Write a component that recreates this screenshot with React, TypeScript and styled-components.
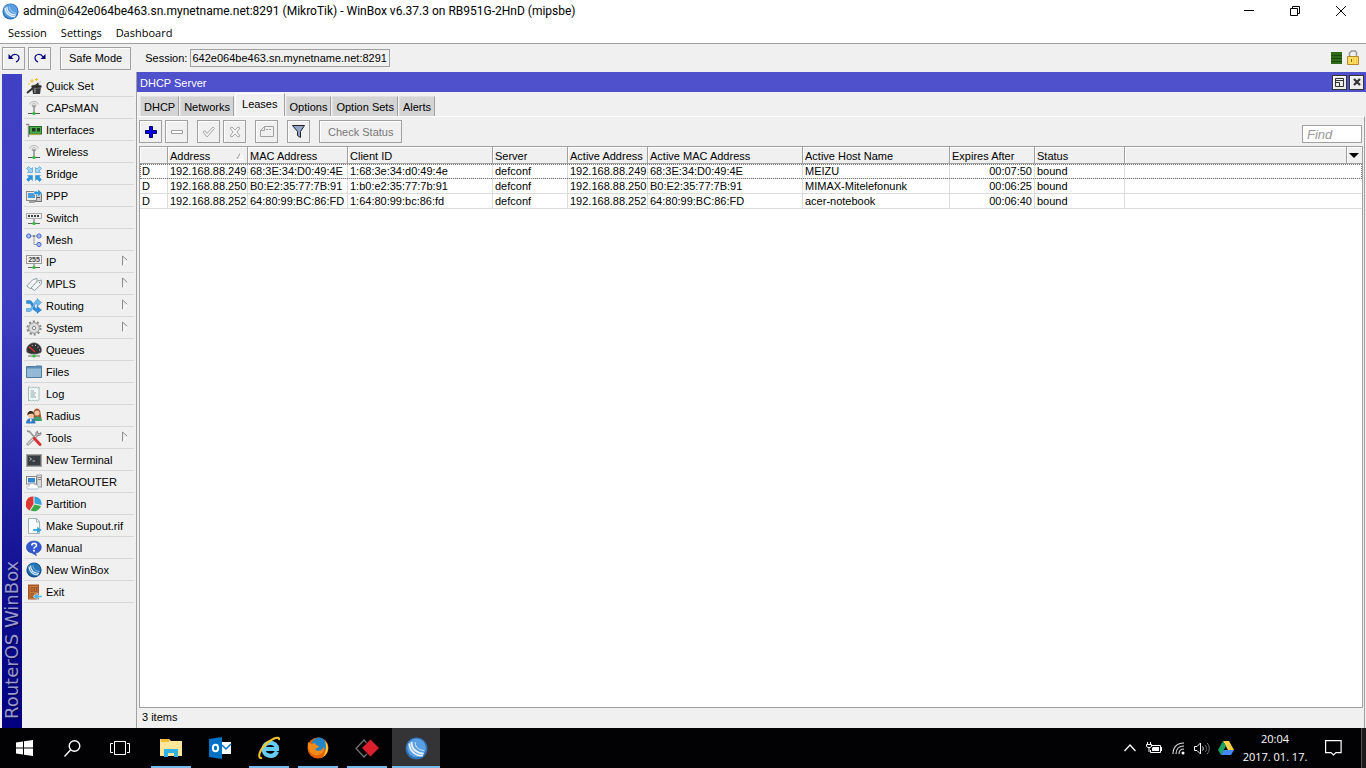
import React from 'react';
import styled, { createGlobalStyle } from 'styled-components';

const ui = '"Liberation Sans", Arial, sans-serif';
const shell = '"Open Sans", "Segoe UI", sans-serif';
const line = '#a0a0a0';

const GlobalStyle = createGlobalStyle`
  *, *::before, *::after { box-sizing: border-box; }
  body { margin: 0; background: #f0f0f0; color: #000; font: 11px/14px ${ui}; }
  button, input { font: inherit; color: inherit; }
  button { border: 0; padding: 0; background: none; }
  svg { display: block; flex: none; }
`;

const Screen = styled.div`
  min-height: 100vh;
  display: flex;
  flex-direction: column;
`;

const TitleBar = styled.header`
  height: 22px;
  display: flex;
  align-items: center;
  background: #fff;
  padding: 0 2px;
  gap: 4px;
`;

const WindowTitle = styled.h1`
  margin: 0;
  flex: 1;
  font: 400 12px/16px Roboto, "Segoe UI", sans-serif;
`;

const WindowButtons = styled.div`
  display: flex;
`;

const WindowButton = styled.button`
  width: 46px;
  height: 22px;
  display: flex;
  align-items: center;
  justify-content: center;
`;

const MenuBar = styled.nav`
  height: 22px;
  display: flex;
  gap: 14px;
  padding: 0 8px;
  background: #fff;
  border-bottom: 1px solid ${line};
`;

const MenuButton = styled.button`
  font: 11px/20px ${shell};
`;

const SessionBar = styled.div`
  height: 28px;
  display: flex;
  align-items: center;
  padding: 0 7px 0 2px;
  gap: 3px;
`;

const ToolButton = styled.button<{ $wide?: boolean; $gap?: boolean; $muted?: boolean }>`
  height: 23px;
  width: ${p => (p.$wide ? 'auto' : '23px')};
  padding: 0 ${p => (p.$wide ? '8px' : '0')};
  margin-left: ${p => (p.$gap ? '6px' : '0')};
  display: flex;
  align-items: center;
  justify-content: center;
  border: 1px solid ${line};
  box-shadow: inset 1px 1px #fff;
  background: #f0f0f0;
  color: ${p => (p.$muted ? '#787878' : '#000')};
`;

const SessionLabel = styled.label`
  margin-left: 11px;
  flex: 1;
  display: flex;
  align-items: center;
`;

const SessionInput = styled.input`
  width: 200px;
  height: 18px;
  padding: 0 1px;
  border: 1px solid ${line};
  background: #f0f0f0;
`;

const Body = styled.div`
  flex: 1;
  display: flex;
`;

const Brand = styled.div`
  width: 20px;
  margin: 0 2px 2px;
  padding-top: 9px;
  background: linear-gradient(#000080 0%, #101090 22%, #3c3cc0 64%, #4040c4 100%);
  color: #9a9ace;
  font: 18px/20px "DejaVu Sans", Verdana, sans-serif;
  text-shadow: -1px 1px 1px #00004c;
  writing-mode: vertical-rl;
  transform: rotate(180deg);
`;

const BrandColumn = styled.div`
  display: flex;
  padding-top: 2px;
  margin-bottom: -2px;
`;

const SideNav = styled.nav`
  width: 112px;
  padding: 3px 2px 0 0;
  display: flex;
  flex-direction: column;
`;

const SideItem = styled.button`
  height: 22px;
  display: flex;
  align-items: center;
  gap: 4px;
  padding: 0 6px 0 2px;
  border-bottom: 1px solid #d8d8d8;
  text-align: left;
`;

const SideText = styled.span`
  flex: 1;
  white-space: nowrap;
`;

const Pane = styled.main`
  flex: 1;
  min-width: 0;
  display: flex;
  flex-direction: column;
  border-left: 1px solid ${line};
`;

const PaneTitle = styled.div`
  height: 20px;
  display: flex;
  align-items: center;
  gap: 2px;
  padding: 0 2px 0 3px;
  background: #4e50cc;
  color: #fff;
`;

const PaneHeading = styled.h2`
  margin: 0;
  padding-top: 2px;
  flex: 1;
  font: 400 11px/14px ${ui};
`;

const PaneButton = styled.button`
  width: 15px;
  height: 15px;
  background: #ececec;
  border: 1px solid #333;
  box-shadow: inset 1px 1px #fff;
  display: flex;
  align-items: center;
  justify-content: center;
`;

const Tabs = styled.div`
  height: 24px;
  display: flex;
  align-items: flex-end;
  padding-left: 3px;
  gap: 1px;
`;

const Tab = styled.button<{ $on?: boolean }>`
  height: ${p => (p.$on ? '23px' : '20px')};
  padding: 0 ${p => (p.$on ? '6px 2px' : '3px 0')};
  background: ${p => (p.$on ? '#f0f0f0' : '#d4d4d4')};
  border: 1px solid ${p => (p.$on ? '#fff' : '#e0e0e0')};
  border-right-color: ${line};
  border-bottom: 0;
`;

const Content = styled.section`
  flex: 1;
  display: flex;
  flex-direction: column;
  margin-right: 1px;
  padding: 0 1px 0 2px;
  border-top: 1px solid #fff;
  border-right: 1px solid ${line};
`;

const ActionBar = styled.div`
  height: 29px;
  display: flex;
  align-items: center;
  gap: 3px;
  padding-right: 1px;
`;

const FindInput = styled.input`
  width: 60px;
  height: 18px;
  margin: 5px 0 0 auto;
  padding: 0 4px;
  border: 1px solid ${line};
  background: #fff;
  font-size: 13px;
  font-style: italic;
  &::placeholder { color: #999; opacity: 1; }
`;

const Grid = styled.div`
  flex: 1;
  background: #fff;
  border: 1px solid ${line};
`;

const Table = styled.table`
  width: 100%;
  table-layout: fixed;
  border-collapse: separate;
  border-spacing: 0;
`;

const Head = styled.th`
  height: 17px;
  padding: 1px 2px 0;
  background: #f0f0f0;
  border-right: 1px solid ${line};
  border-bottom: 1px solid ${line};
  box-shadow: inset 1px 1px #fff;
  font-weight: 400;
  text-align: left;
  white-space: nowrap;
  &:last-child { border-right: 0; }
`;

const HeadInner = styled.span`
  display: flex;
  align-items: center;
  justify-content: space-between;
`;

const Row = styled.tr<{ $focus?: boolean }>`
  outline: ${p => (p.$focus ? '1px dotted #777' : 'none')};
  outline-offset: -1px;
`;

const Cell = styled.td<{ $right?: boolean }>`
  height: 15px;
  padding: 0 2px;
  line-height: 14px;
  border-right: 1px solid #dcdcdc;
  border-bottom: 1px solid #dcdcdc;
  text-align: ${p => (p.$right ? 'right' : 'left')};
  white-space: nowrap;
  &:last-child { border-right: 0; }
`;

const Status = styled.footer`
  height: 20px;
  padding: 2px 3px;
`;

const Taskbar = styled.footer`
  position: relative;
  height: 40px;
  display: flex;
  background: #020204;
  color: #fff;
`;

const TaskGroup = styled.div<{ $apps?: boolean }>`
  display: flex;
  gap: ${p => (p.$apps ? '1px' : '0')};
  margin-left: ${p => (p.$apps ? '3px' : '0')};
`;

const TaskButton = styled.button<{ $state?: 'open' | 'active' }>`
  width: 48px;
  height: 40px;
  display: flex;
  align-items: center;
  justify-content: center;
  background:
    linear-gradient(#76b9ed, #76b9ed) bottom / ${p => (p.$state === 'active' ? '48px' : p.$state ? '40px' : '0')} 2px no-repeat
    ${p => (p.$state === 'active' ? '#343436' : 'transparent')};
`;

const Tray = styled.div`
  margin-left: auto;
  display: flex;
  align-items: center;
`;

const TrayButton = styled.button`
  width: 24px;
  height: 40px;
  display: flex;
  align-items: center;
  justify-content: center;
`;

const Clock = styled.button`
  width: 71px;
  height: 40px;
  padding-left: 3px;
  font: 11px/18px ${shell};
  text-align: center;
`;

const Notices = styled(TrayButton)`
  width: 48px;
  margin-right: 4px;
`;

const DesktopButton = styled.button`
  width: 5px;
  height: 40px;
  border-left: 1px solid #555;
  background: #1c1a1a;
`;

const Svg = ({ s = 16, children }: { s?: number; children: React.ReactNode }) => (
  <svg width={s} height={s} viewBox="0 0 16 16" fill="none" aria-hidden="true">{children}</svg>
);

const Orb = ({ s = 16, dark }: { s?: number; dark?: boolean }) => (
  <Svg s={s}>
    <circle cx="8" cy="8" r="7.6" fill={dark ? '#124f88' : '#2f72b8'} />
    <circle cx="8" cy="7.500" r="6.500" fill={dark ? '#2474b8' : '#5a9fe2'} />
    <path d="M3 4.500c0 5 4 8.500 9.500 8.500M4.500 3.500c0 4.500 3 7.500 8.500 8" stroke="#e8f3fc" strokeWidth="1.200" />
    <path d="M7 3.500c0 3 2 5.500 6.500 6" stroke="#bcdcf6" strokeWidth=".7" />
  </Svg>
);

const antenna = (
  <Svg>
    <path d="M3.500 4.500c1-4 8-4 9 0M5.500 5.500c1-2.500 4-2.500 5 0" stroke="#b0b0b0" />
    <path d="M8 5.500V13M6 6h4" stroke="#777" strokeWidth="1.200" />
    <path d="M2 13.500h12" stroke="#555" />
    <rect x="6.500" y="12" width="3" height="3" rx="1" fill="#2fc23a" />
  </Svg>
);

const bridgeArrow = 'M6.500 1.500v5h-5L3 5 .5 2.500l2-2L5 3z';

const icons: Record<string, React.ReactNode> = {
  'Quick Set': <Svg><path d="M6 9h9l-1 7H7z" fill="#3a3a3a" /><path d="M9 10v5" stroke="#aaa" /><ellipse cx="10.500" cy="8.500" rx="5.300" ry="1.700" fill="#222" stroke="#999" strokeWidth=".6" /><path d="M1 15L13 5" stroke="#333" strokeWidth="2" /><path d="M12.500 5.500L15 3" stroke="#ddd" strokeWidth="2" /><path d="M6 1v4M4 3h4M10.500 0v3M9 1.500h3M2 6h2" stroke="#ecc02c" /></Svg>,
  CAPsMAN: antenna,
  Wireless: antenna,
  Interfaces: <Svg><path d="M0 2.500h2.500V15" stroke="#8f8f8f" strokeWidth="1.500" /><path d="M1.500 3v12" stroke="#ddd" /><rect x="3.500" y="4.500" width="12" height="7.500" fill="#4cab4c" stroke="#23702a" /><path d="M6 6h3.500v3.500H6zM11 6h3v3.500h-3z" fill="#1e3a22" /><path d="M5 12.500h9" stroke="#c9a92c" strokeWidth="1.500" strokeDasharray="1 1" /></Svg>,
  Bridge: <Svg><g stroke="#2f86c4" strokeWidth=".5"><path d={bridgeArrow} fill="#9bd4f4" /><path d={bridgeArrow} transform="matrix(-1 0 0 1 16 0)" fill="#9bd4f4" /><path d={bridgeArrow} transform="matrix(1 0 0 -1 0 16)" fill="#2a98dc" /><path d={bridgeArrow} transform="matrix(-1 0 0 -1 16 16)" fill="#2a98dc" /></g></Svg>,
  PPP: <Svg><rect x="9.500" y="5.500" width="6" height="8" fill="#c8c8c8" stroke="#777" /><path d="M11 9.500h3" stroke="#555" /><rect x=".5" y="3.500" width="10" height="9" fill="#ececec" stroke="#888" /><rect x="2" y="5" width="7" height="5" fill="#4c9ad8" /><path d="M3 14h6" stroke="#888" strokeWidth="1.500" /><path d="M8 3.500h4V1l4 4-4 4V6.500H8z" fill="#2d98d8" stroke="#fff" strokeWidth=".4" /></Svg>,
  Switch: <Svg><rect x=".5" y="3.500" width="15" height="5" fill="#eee" stroke="#aaa" /><path d="M2 6h12" stroke="#444" strokeWidth="2" strokeDasharray="2 1" /><path d="M8 9v4M2 13.500h12" stroke="#666" /><rect x="6.500" y="12" width="3" height="3" rx="1" fill="#2fc23a" /></Svg>,
  Mesh: <Svg><path d="M4 4h8M8 4v8.500h4" stroke="#999" /><g fill="#a9bdf4" stroke="#4666cc"><circle cx="2.700" cy="4" r="2.100" /><circle cx="13" cy="4" r="2.100" /><circle cx="13" cy="12.500" r="2.100" /></g><circle cx="8" cy="4" r="1" fill="#777" /></Svg>,
  IP: <Svg><rect x=".5" y="1.500" width="15" height="8" fill="#f6f6f6" stroke="#999" /><text x="8" y="8" textAnchor="middle" fontFamily="Liberation Sans, sans-serif" fontWeight="700" fontSize="7" fill="#444">255</text><path d="M8 10v3M2 13.500h12" stroke="#666" /><rect x="6.500" y="12" width="3" height="3" rx="1" fill="#2fc23a" /></Svg>,
  MPLS: <Svg><g fill="#f3f6f6" stroke="#8e9da0"><path d="M.7 10L7 3.500l4-1v4L5 13z" /><path d="M5 12l6.500-7 3.800-1v4L8.500 14.500z" /></g><path d="M13 7l1-1" stroke="#678" /></Svg>,
  Routing: <Svg><path d="M.5 2.500h3c4 0 4 8 7.500 8V8l4.500 4-4.500 3.500V13.500C6 13.500 6 5.500 3.500 5.500h-3z" fill="#2f8fd8" stroke="#2169a8" strokeWidth=".4" /><path d="M.5 13.500v-3h3c3.500 0 4-8 7.500-8V.5l4.500 4-4.500 4V5.500c-3 0-4 8-7.500 8z" fill="#6cbcf2" stroke="#2169a8" strokeWidth=".4" /></Svg>,
  System: <Svg><circle cx="8" cy="8" r="6.500" stroke="#8c8c8c" strokeWidth="2.200" strokeDasharray="2.100 2" /><circle cx="8" cy="8" r="5.300" fill="#d9d9d9" stroke="#9a9a9a" /><circle cx="8" cy="8" r="3.200" stroke="#eee" strokeDasharray="2 1.500" /><circle cx="8" cy="8" r="1.700" fill="#f0f0f0" stroke="#888" /></Svg>,
  Queues: <Svg><path d="M1 10.500C-1 5 4 .8 8 .8s9 4.200 7 9.700L11 12H5z" fill="#333" stroke="#777" strokeWidth=".6" /><path d="M3 4.500l6 5.500" stroke="#e03030" strokeWidth="1.200" /><path d="M6 3l.5 1M9.500 2.800V4M12.500 5l-1 .7M14 8h-1" stroke="#ccc" /><path d="M2 14h12" stroke="#666" /><rect x="6.500" y="12.500" width="3" height="3" rx="1" fill="#2fc23a" /></Svg>,
  Files: <Svg><path d="M.5 13.500v-11h9l.5-.5h5.500v11.500z" fill="#5f8fb4" stroke="#4f7c9e" /><rect x="1" y="4.500" width="14" height="8.500" fill="#93b9d6" /></Svg>,
  Log: <Svg><path d="M2.500 1v14l1.500-1 1.500 1L7 14l1.500 1 1.500-1 1.500 1 1.500-1V1l-1.500 1L10 1 8.500 2 7 1 5.500 2 4 1z" fill="#f3fafa" stroke="#8fb0ae" strokeWidth=".8" /><path d="M4.500 5H8M4.500 7H10M4.500 9H9M4.500 11H10" stroke="#8a9c9c" strokeWidth=".9" /></Svg>,
  Radius: <Svg><path d="M7.500 11V5c0-6 7-6 7 0l1 6z" fill="#a65432" /><circle cx="11" cy="5" r="2.600" fill="#f2c59b" /><path d="M7 13c0-6 9-6 9 0z" fill="#3c9d70" /><circle cx="4.800" cy="7" r="2.900" fill="#f2c59b" /><path d="M1.500 7.500C.5 1.500 9 1.500 8 7L6.500 5.500 3 6z" fill="#35251b" /><path d="M0 15.500c0-7 9.500-7 9.500 0z" fill="#327bc4" /><path d="M4.800 10.500v3" stroke="#fff" strokeWidth="1.500" /></Svg>,
  Tools: <Svg><path d="M2 14L12 4" stroke="#888" strokeWidth="3" strokeLinecap="round" /><path d="M2 14L12 4" stroke="#ddd" strokeWidth="1.200" strokeLinecap="round" /><path d="M11.500 1c-2.500 1.500-2 4.500 0 4.500s4 0 3.500-3L13 4l-1.500-1z" fill="#bbb" stroke="#777" strokeWidth=".8" /><path d="M1 1l2.500.5L9 8" stroke="#999" strokeWidth="1.800" /><path d="M8.500 8.500l5.500 6" stroke="#d83434" strokeWidth="3" strokeLinecap="round" /></Svg>,
  'New Terminal': <Svg><rect x=".5" y="2.500" width="15" height="12" fill="#666" stroke="#a4a4a4" /><rect x="2" y="4" width="12" height="9" fill="#383d44" /><path d="M3.500 5.500l2 1.500-2 1.500M6.500 9H9" stroke="#ddd" strokeWidth=".8" /></Svg>,
  MetaROUTER: <Svg><rect x="11" y="1" width="4.500" height="12" fill="#dadada" stroke="#999" /><path d="M12 3.500h3M12 5.500h3" stroke="#888" /><rect x=".5" y="2.500" width="10" height="7.500" fill="#eee" stroke="#888" /><rect x="2" y="4" width="7" height="4.500" fill="#3188d0" /><path d="M3 15c-3 0-3-3 0-3 1-3 5-3 6-1 3-1 5 4 2 4z" fill="#fff" stroke="#9ab" strokeWidth=".7" /></Svg>,
  Partition: <Svg><path d="M8.500 7.500V.5a7.200 7.200 0 0 1 7 8.500z" fill="#35a3db" /><path d="M8.500 8.500L15 10a7.500 7.500 0 0 1-10.500 4.500z" fill="#39a949" /><path d="M7.500 8l-4 6.500A7.500 7.500 0 0 1 7.500.5z" fill="#dc3936" /></Svg>,
  'Make Supout.rif': <Svg><path d="M2.500.5h8l3 3v12h-11z" fill="#f8fcfc" stroke="#9cafaf" /><path d="M10.500.5v3.500h3" stroke="#9cafaf" /><path d="M7 11h4V8.500l5 3.500-5 3.500V13H7z" fill="#31a2d8" stroke="#fff" strokeWidth=".3" /></Svg>,
  Manual: <Svg><path d="M8 1c9.500 0 9.500 11.500 1.500 12l1 2.800L6 13C-2 12-1.500 1 8 1z" fill="#3359d2" stroke="#233c99" strokeWidth=".5" /><path d="M5.800 5.500c0-3 4.700-3 4.700 0C10.500 7 8 7 8 8.700" stroke="#fff" strokeWidth="1.500" /><circle cx="8" cy="10.800" r="1" fill="#fff" /></Svg>,
  'New WinBox': <Orb dark />,
  Exit: <Svg><rect x="2" y=".5" width="11" height="15" fill="#a85524" /><rect x="3.500" y="2" width="8" height="13" fill="#c87a3e" /><path d="M5 3.500h2v4H5zM8.500 3.500h2v4h-2zM5 9.500h2v4H5z" stroke="#9c5222" /><path d="M16 11.500h-4V9l-5 3.500 5 3.500v-2.500h4z" fill="#49b4e8" stroke="#fff" strokeWidth=".4" /></Svg>,
};

const sideItems = ['Quick Set', 'CAPsMAN', 'Interfaces', 'Wireless', 'Bridge', 'PPP', 'Switch', 'Mesh', 'IP', 'MPLS', 'Routing', 'System', 'Queues', 'Files', 'Log', 'Radius', 'Tools', 'New Terminal', 'MetaROUTER', 'Partition', 'Make Supout.rif', 'Manual', 'New WinBox', 'Exit'];
const withSubmenu = ['IP', 'MPLS', 'Routing', 'System', 'Tools'];

const tabs = ['DHCP', 'Networks', 'Leases', 'Options', 'Option Sets', 'Alerts'];

const columns: [string, number | undefined][] = [
  ['', 28], ['Address', 80], ['MAC Address', 100], ['Client ID', 145], ['Server', 75], ['Active Address', 80],
  ['Active MAC Address', 155], ['Active Host Name', 147], ['Expires After', 85], ['Status', 90], ['', undefined],
];

const leases = [
  ['D', '192.168.88.249', '68:3E:34:D0:49:4E', '1:68:3e:34:d0:49:4e', 'defconf', '192.168.88.249', '68:3E:34:D0:49:4E', 'MEIZU', '00:07:50', 'bound'],
  ['D', '192.168.88.250', 'B0:E2:35:77:7B:91', '1:b0:e2:35:77:7b:91', 'defconf', '192.168.88.250', 'B0:E2:35:77:7B:91', 'MIMAX-Mitelefonunk', '00:06:25', 'bound'],
  ['D', '192.168.88.252', '64:80:99:BC:86:FD', '1:64:80:99:bc:86:fd', 'defconf', '192.168.88.252', '64:80:99:BC:86:FD', 'acer-notebook', '00:06:40', 'bound'],
];

const apps: { name: string; state?: 'open' | 'active'; icon: React.ReactNode }[] = [
  { name: 'File Explorer', state: 'open', icon: <svg width="22" height="20" viewBox="0 0 22 20"><path d="M0 1h9l2 2h11v15H0z" fill="#ffe69a" /><path d="M1 1h8v3H1z" fill="#f2bd33" /><path d="M4 19v-8h14v8h-4v-4H8v4z" fill="#35b2e5" /></svg> },
  { name: 'Outlook', icon: <svg width="23" height="22" viewBox="0 0 23 22"><path d="M12 5h10v12H12z" fill="#fff" /><path d="M13 8l4 4 5-5" stroke="#0072c6" strokeWidth="1.500" fill="none" /><path d="M0 2l13-2v22L0 20z" fill="#0072c6" /><ellipse cx="6.500" cy="11" rx="2.600" ry="3.300" stroke="#fff" strokeWidth="2" fill="none" /></svg> },
  { name: 'Internet Explorer', state: 'open', icon: <svg width="24" height="24" viewBox="0 0 24 24" fill="none"><path d="M20 15.500c-3 6.500-13.500 5.500-13.500-2.500s13.500-8.500 13.500 0H8" stroke="#66cdf5" strokeWidth="4.200" /><path d="M5 22c-4 1-4-5 2-12S23-1 22 4" stroke="#f4c52c" strokeWidth="2" /></svg> },
  { name: 'Firefox', state: 'open', icon: <svg width="22" height="22" viewBox="0 0 22 22"><circle cx="11" cy="11" r="10.500" fill="#e66000" /><circle cx="12" cy="8" r="7.500" fill="#2384c6" /><path d="M1 5l3 2 4-1c0 3 5 2 4 4l-4 2c3 4 8 1 9-3 1 7-4 10-9 9C3 17 0 12 1 5z" fill="#f08a18" /><path d="M18 4c5 5 3 13-2 16 3-5 4-10 2-16z" fill="#ffcf3f" /></svg> },
  { name: 'Remote', state: 'open', icon: <svg width="25" height="21" viewBox="0 0 25 21"><path d="M9 2L1 10.500 9 19l8-8.500z" stroke="#777" strokeWidth="1.200" fill="none" /><path d="M15.500 1l9 9-9 9-9-9z" fill="#dc1f2c" stroke="#020204" /></svg> },
  { name: 'WinBox', state: 'active', icon: <Orb s={23} /> },
];

export default function App() {
  return (
    <Screen>
      <GlobalStyle />
      <TitleBar>
        <Orb s={17} />
        <WindowTitle>admin@642e064be463.sn.mynetname.net:8291 (MikroTik) - WinBox v6.37.3 on RB951G-2HnD (mipsbe)</WindowTitle>
        <WindowButtons>
          <WindowButton aria-label="Minimize"><svg width="10" height="10"><path d="M0 4.500h10" stroke="#000" /></svg></WindowButton>
          <WindowButton aria-label="Restore"><svg width="10" height="10" fill="none" stroke="#000"><path d="M.5 2.500h7v7h-7zM2.500 2V.5h7v7H8" /></svg></WindowButton>
          <WindowButton aria-label="Close"><svg width="10" height="10" stroke="#000"><path d="M0 0l10 10M10 0L0 10" /></svg></WindowButton>
        </WindowButtons>
      </TitleBar>
      <MenuBar>
        {['Session', 'Settings', 'Dashboard'].map(m => <MenuButton key={m}>{m}</MenuButton>)}
      </MenuBar>
      <SessionBar>
        <ToolButton aria-label="Undo"><svg width="12" height="10" fill="none" stroke="#000080"><path d="M3 4c2-4 8-3 8 1 0 2-1 3-3 4" strokeWidth="1.200" /><path d="M.5 1v5h5z" fill="#000080" stroke="none" /></svg></ToolButton>
        <ToolButton aria-label="Redo"><svg width="12" height="10" fill="none" stroke="#000080"><path d="M9 4C7 0 1 1 1 5c0 2 1 3 3 4" strokeWidth="1.200" /><path d="M11.500 1v5h-5z" fill="#000080" stroke="none" /></svg></ToolButton>
        <ToolButton $wide $gap>Safe Mode</ToolButton>
        <SessionLabel>Session:&nbsp;<SessionInput readOnly value="642e064be463.sn.mynetname.net:8291" /></SessionLabel>
        <svg width="28" height="16"><path d="M0 2h11v12H0z" fill="#2f6a16" /><path d="M0 5.500h11M0 8.500h11M0 11.500h11" stroke="#1d4a0b" /><path d="M18.500 7V3l2-2h4l1 2v4" stroke="#999" strokeWidth="1.500" fill="none" /><path d="M16.500 6.500h11v8h-11z" fill="#ffe060" stroke="#b8872a" /><path d="M22.500 7v7M25.500 7v7" stroke="#f8c444" /><path d="M20.500 9v3" stroke="#8a6420" /></svg>
      </SessionBar>
      <Body>
        <BrandColumn><Brand>RouterOS WinBox</Brand></BrandColumn>
        <SideNav>
          {sideItems.map(name => (
            <SideItem key={name}>
              {icons[name]}
              <SideText>{name}</SideText>
              {withSubmenu.includes(name) && <svg width="7" height="14" fill="none"><path d="M1.500 10.500V1l5 4.500" stroke="#8c8c8c" /><path d="M2 10.500l4.500-5" stroke="#fff" /></svg>}
            </SideItem>
          ))}
        </SideNav>
        <Pane>
          <PaneTitle>
            <PaneHeading>DHCP Server</PaneHeading>
            <PaneButton aria-label="Restore pane"><svg width="9" height="9" fill="none" stroke="#333"><path d="M.5.5h8v8h-8zM.5 2.500h8M.5 4.500h4v4" /></svg></PaneButton>
            <PaneButton aria-label="Close pane"><svg width="8" height="8" stroke="#333" strokeWidth="2.200"><path d="M1 1l6 6M7 1L1 7" /></svg></PaneButton>
          </PaneTitle>
          <Tabs role="tablist">
            {tabs.map(t => <Tab key={t} role="tab" aria-selected={t === 'Leases'} $on={t === 'Leases'}>{t}</Tab>)}
          </Tabs>
          <Content>
            <ActionBar>
              <ToolButton aria-label="Add"><svg width="12" height="12"><path d="M4.500.5h3v4h4v3h-4v4h-3v-4h-4v-3h4z" fill="#0000f0" stroke="#000060" /></svg></ToolButton>
              <ToolButton aria-label="Remove"><svg width="12" height="4"><path d="M.5.5h11v3H.5z" fill="#fff" stroke="#a0a0a0" /></svg></ToolButton>
              <ToolButton $gap aria-label="Enable"><svg width="13" height="12"><path d="M1 6l2-1.500 2 3L11 1l1.500 1.500L5 11z" fill="#f4f4f4" stroke="#a8a8a8" /></svg></ToolButton>
              <ToolButton aria-label="Disable"><svg width="12" height="12"><path d="M1 2l2-1 3 3 3-3 2 1-3 4 3 4-2 1-3-3-3 3-2-1 3-4z" fill="#f4f4f4" stroke="#a8a8a8" /></svg></ToolButton>
              <ToolButton $gap aria-label="Comment"><svg width="14" height="11" fill="none" stroke="#a0a0a0"><path d="M.5 10.500v-6l4-4h9v10zM.5 4.500h4v-4M6 3.500h2m1 0h2" /></svg></ToolButton>
              <ToolButton $gap aria-label="Filter"><svg width="13" height="13"><path d="M.5.5h12l-4 6v6l-3-2v-4z" fill="#91a5cc" stroke="#222" /></svg></ToolButton>
              <ToolButton $wide $gap $muted>Check Status</ToolButton>
              <FindInput aria-label="Find" placeholder="Find" />
            </ActionBar>
            <Grid>
              <Table>
                <colgroup>
                  {columns.map(([, w], i) => <col key={i} width={w} />)}
                  <col width={15} />
                </colgroup>
                <thead>
                  <tr>
                    {columns.map(([label], i) => (
                      <Head key={i}>
                        {label === 'Address'
                          ? <HeadInner>{label}<svg width="10" height="8" fill="none"><path d="M1.500 7.500L5.500 1" stroke="#999" /><path d="M5.500 1l2.500 6.500H1" stroke="#fff" /></svg></HeadInner>
                          : label}
                      </Head>
                    ))}
                    <Head aria-label="Columns"><svg width="10" height="5"><path d="M0 0h10L5 5z" fill="#000" /></svg></Head>
                  </tr>
                </thead>
                <tbody>
                  {leases.map((r, n) => (
                    <Row key={r[1]} $focus={n === 0}>
                      {r.map((v, i) => <Cell key={i} $right={i === 8}>{v}</Cell>)}
                      <Cell colSpan={2} />
                    </Row>
                  ))}
                </tbody>
              </Table>
            </Grid>
            <Status>3 items</Status>
          </Content>
        </Pane>
      </Body>
      <Taskbar>
        <TaskGroup>
          <TaskButton aria-label="Start"><svg width="17" height="16" fill="#fff"><path d="M0 2.500L7 1.500V7.500H0zM8 1.300L17 0v7.500H8zM0 8.500h7v6l-7-1zM8 8.500h9V16l-9-1.300z" /></svg></TaskButton>
          <TaskButton aria-label="Search"><svg width="17" height="17" fill="none" stroke="#fff" strokeWidth="1.400"><circle cx="10.500" cy="6" r="5.300" /><path d="M6.500 10L.5 16.500" /></svg></TaskButton>
          <TaskButton aria-label="Task view"><svg width="20" height="14" fill="none" stroke="#fff"><path d="M4.500.5h11v13h-11zM3 2.500H.5v9H3M17 2.500h2.500v9H17" /></svg></TaskButton>
        </TaskGroup>
        <TaskGroup $apps>
          {apps.map(a => <TaskButton key={a.name} aria-label={a.name} $state={a.state}>{a.icon}</TaskButton>)}
        </TaskGroup>
        <Tray>
          <TrayButton aria-label="Hidden icons"><svg width="12" height="8" fill="none" stroke="#fff" strokeWidth="1.300"><path d="M.5 7L6 1l5.500 6" /></svg></TrayButton>
          <TrayButton aria-label="Battery"><svg width="16" height="13" fill="none" stroke="#fff"><path d="M6 3.500h8.500v7H4.500V8M15.500 5v4" /><path d="M7 5h6v4H6V6z" fill="#fff" stroke="none" /><path d="M1.500 0v3M4.500 0v3M.5 2.500h5v2l-1.500 1H2L.5 4.500zM3 5v5" /></svg></TrayButton>
          <TrayButton aria-label="Wi-Fi"><svg width="13" height="13" fill="none" stroke="#ddd" strokeWidth="1.200"><path d="M1 12C1 5 5 1 12 1M4 12c0-5 3-8 8-8M7 12c0-3 2-5 5-5" /><circle cx="11" cy="11" r="1.500" fill="#fff" stroke="none" /></svg></TrayButton>
          <TrayButton aria-label="Volume"><svg width="16" height="13" fill="none" stroke="#fff"><path d="M.5 4.500H3L6.500 1v11L3 8.500H.5z" /><path d="M8.500 4.500c1 1 1 3 0 4" /><path d="M11 3c2 2 2 5 0 7M13 1c3 3 3 8 0 11" stroke="#777" /></svg></TrayButton>
          <TrayButton aria-label="Google Drive"><svg width="16" height="14"><path d="M5 0h6l5 9h-6z" fill="#ffd04b" /><path d="M5 0l3 5-5 9-3-5z" fill="#1da462" /><path d="M5.500 9H16l-3 5H3z" fill="#4688f4" /></svg></TrayButton>
          <Clock>20:04<br />2017. 01. 17.</Clock>
          <Notices aria-label="Notifications"><svg width="17" height="16" fill="none" stroke="#fff" strokeWidth="1.200"><path d="M.6.6h15.500v12H11L8.500 15 6 12.600H.6z" /></svg></Notices>
          <DesktopButton aria-label="Show desktop" />
        </Tray>
      </Taskbar>
    </Screen>
  );
}
